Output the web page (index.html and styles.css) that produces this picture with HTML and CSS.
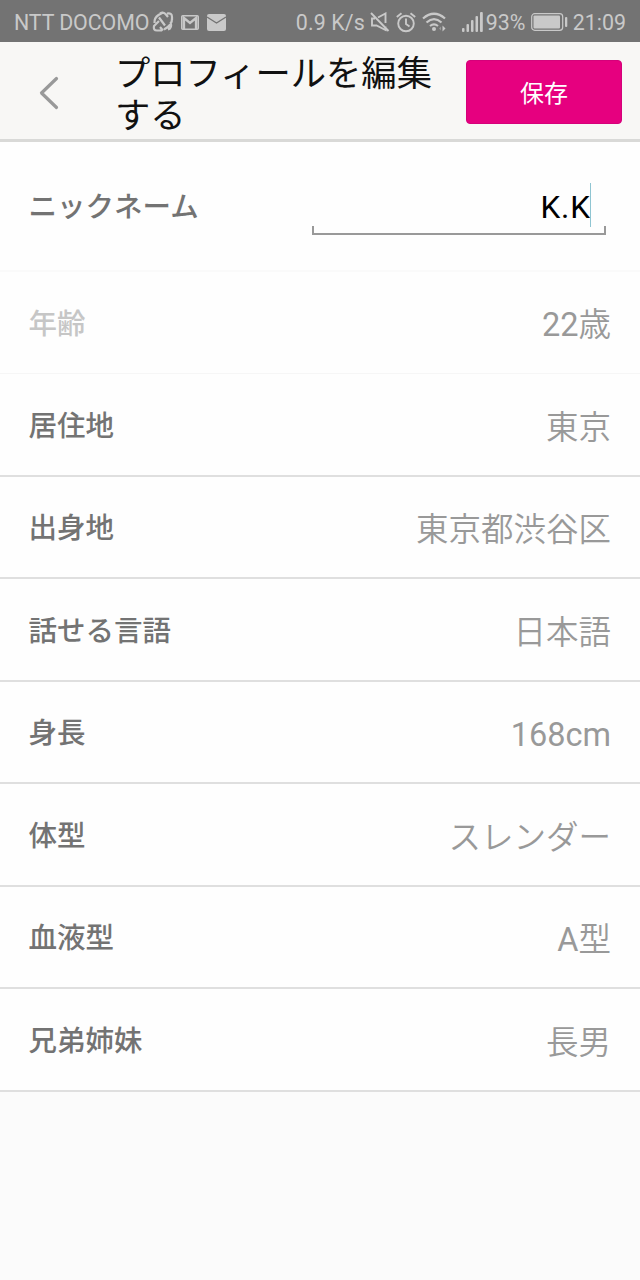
FILE: index.html
```html
<!DOCTYPE html>
<html lang="ja">
<head>
<meta charset="utf-8">
<title>プロフィールを編集する</title>
<link rel="stylesheet" href="styles.css">
</head>
<body>
<div class="status">
  <span class="carrier">NTT DOCOMO</span>
  <svg class="ic-sync" width="24" height="24" viewBox="0 0 24 24" fill="none" stroke="#c9c9c9" stroke-width="2.200" stroke-linejoin="round">
    <path d="M3.500 13Q3 8 7.500 5L12 2.500M9 3.500Q12 1.500 14.500 4L17 7M16 3.500Q21 2.500 21 7V10M21 8Q21.500 15 13 19.500M19.500 12Q21.500 18 17 19.500M8 11L3 16Q2 20.500 6 20.500H11M9 17L12 20.500M8 7.500L14 15.500"/>
  </svg>
  <svg class="ic-gmail" width="18" height="15" viewBox="0 0 18 15" fill="none" stroke="#c9c9c9">
    <rect x=".8" y=".8" width="16.400" height="13.400" rx="1" stroke-width="1.600"/>
    <path d="M3 14V3L9 8L15 3V14" stroke-width="2.300"/>
  </svg>
  <svg class="ic-mail" width="19" height="17" viewBox="0 0 19 17">
    <rect width="19" height="17" rx="2" fill="#c9c9c9"/>
    <path d="M0 3L9.500 9L19 3" fill="none" stroke="#737373" stroke-width="1.300"/>
  </svg>
  <span class="speed">0.9 K/s</span>
  <svg class="ic-mute" width="20" height="20" viewBox="0 0 20 20" fill="none" stroke="#c9c9c9" stroke-width="1.900">
    <path d="M1 1L18.500 19M5 6.500H2V13.500H6.500L15.500 18V14.500M8 5.500L15.500 1.500V11"/>
  </svg>
  <svg class="ic-alarm" width="20" height="21" viewBox="0 0 20 21" fill="none" stroke="#c9c9c9" stroke-width="1.900">
    <circle cx="10" cy="11.500" r="7.800"/>
    <path d="M10 6.500V12L13.500 14.500M.8 5L5.500 1.200M19.200 5L14.500 1.200"/>
  </svg>
  <svg class="ic-wifi" width="25" height="20" viewBox="0 0 25 20" fill="none" stroke="#c9c9c9" stroke-width="2.200">
    <path d="M1 6.500Q12 -3 23 6.500M4.500 10.500Q12 3.800 19.500 10.500M8 14Q12 10.800 16 14"/>
    <circle cx="12" cy="17" r="2" fill="#c9c9c9" stroke="none"/>
    <path d="M20.500 13.500L23.500 16.500L20.500 19.500Z" fill="#c9c9c9" stroke="none"/>
    <path d="M19 14.500L17 16.500L19 18.500Z" fill="#999" stroke="none"/>
  </svg>
  <svg class="ic-signal" width="21" height="20" viewBox="0 0 21 20" fill="#c9c9c9">
    <rect x="0" y="16" width="2.500" height="4" rx="1"/><rect x="4.500" y="12" width="2.500" height="8" rx="1"/><rect x="9" y="8" width="2.500" height="12" rx="1"/><rect x="13.500" y="4" width="2.500" height="16" rx="1"/><rect x="18" y="0" width="2.800" height="20" rx="1"/>
  </svg>
  <span class="percent">93%</span>
  <svg class="ic-battery" width="37" height="18" viewBox="0 0 37 18">
    <rect x=".7" y=".7" width="31" height="16.600" rx="3" fill="none" stroke="#c9c9c9" stroke-width="1.200"/>
    <rect x="2.500" y="2.500" width="26.500" height="13" rx="1" fill="#c9c9c9"/>
    <rect x="34" y="4" width="2.300" height="10" rx="1" fill="#c9c9c9"/>
  </svg>
  <span class="clock">21:09</span>
</div>
<header class="header">
  <svg class="back" width="20" height="34" viewBox="0 0 20 34"><path d="M17.500 2.500L2.500 17L17.500 31.500" fill="none" stroke="#999" stroke-width="3.200" stroke-linecap="round" stroke-linejoin="round"/></svg>
  <h1 class="title">プロフィールを編集する</h1>
  <button class="save">保存</button>
</header>
<main class="list">
  <div class="row nickname"><span class="label">ニックネーム</span><div class="field"><span class="name">K.K</span><i class="caret"></i></div></div>
  <div class="row age"><span class="label">年齢</span><span class="value"><span class="latin">22</span>歳</span></div>
  <div class="row"><span class="label">居住地</span><span class="value">東京</span></div>
  <div class="row"><span class="label">出身地</span><span class="value">東京都渋谷区</span></div>
  <div class="row"><span class="label">話せる言語</span><span class="value">日本語</span></div>
  <div class="row"><span class="label">身長</span><span class="value"><span class="latin">168cm</span></span></div>
  <div class="row"><span class="label">体型</span><span class="value">スレンダー</span></div>
  <div class="row"><span class="label">血液型</span><span class="value"><span class="latin">A</span>型</span></div>
  <div class="row"><span class="label">兄弟姉妹</span><span class="value">長男</span></div>
</main>
</body>
</html>
```
FILE: styles.css
```css
* { box-sizing: border-box; }
body {
  margin: 0;
  width: 640px;
  height: 1280px;
  overflow: hidden;
  background: #fbfbfb;
  font-family: Roboto, "Noto Sans CJK JP", sans-serif;
}
.status {
  display: flex;
  align-items: center;
  height: 42px;
  padding: 2px 14px 0;
  background: #737373;
  color: #c9c9c9;
  font-size: 21.4px;
  line-height: 40px;
  white-space: nowrap;
}
.status span { padding-top: 1px; }
.status svg { flex: none; }
.carrier { width: 137px; letter-spacing: -.1px; }
.ic-gmail { margin-left: 6px; }
.ic-mail { margin-left: 8px; }
.speed { width: 75px; margin-left: 70px; letter-spacing: .1px; }
.ic-mute { margin-left: -1px; }
.ic-alarm { margin-left: 6px; }
.ic-wifi { margin-left: 6px; }
.ic-signal { margin-left: 15px; }
.percent { width: 45px; margin-left: 3px; }
.clock { margin-left: 5px; }
.header {
  display: flex;
  align-items: center;
  height: 100px;
  padding: 0 18px 0 39px;
  border-bottom: 3px solid #d9d9d7;
  background: #f8f7f5;
}
.back { margin-top: 4px; }
.title {
  width: 330px;
  margin: 9px 0 0 56px;
  color: #111;
  font-size: 35.3px;
  font-weight: 400;
  line-height: 42px;
}
.save {
  width: 156px;
  height: 64px;
  margin: 3px 0 0 auto;
  padding: 5px 0 0;
  border: 1px solid #d5007a;
  border-radius: 4px;
  background: #e6007f;
  color: #fff;
  font: 24px/57px Roboto, "Noto Sans CJK JP", sans-serif;
}
.list { background: #fefefe; }
.row {
  display: flex;
  align-items: center;
  justify-content: space-between;
  height: 102.5px;
  padding: 0 29px 0 28.5px;
  border-bottom: 2px solid #dfdfdf;
}
.label {
  padding-top: 5px;
  color: #737373;
  font-size: 28.5px;
  font-weight: 500;
  line-height: 40px;
}
.value {
  padding-top: 7px;
  color: #999;
  font-size: 32.5px;
  font-weight: 350;
  line-height: 46px;
}
.latin { font-weight: 400; }
.row.nickname { height: 129.500px; padding-right: 34px; border-bottom-color: #fafafa; }
.row.age { border-bottom: 1px solid #f6f6f6; }
.age .label { color: #c6c6c6; }
.age .value { padding-top: 5px; }
.field {
  display: flex;
  align-items: flex-start;
  justify-content: flex-end;
  width: 294px;
  height: 52px;
  margin-top: 6px;
  padding-right: 15px;
  border-bottom: 2px solid #999;
  background:
    linear-gradient(#999, #999) left bottom / 2px 7px no-repeat,
    linear-gradient(#999, #999) right bottom / 2px 7px no-repeat;
}
.name { color: #000; font-size: 31.500px; line-height: 49px; letter-spacing: .8px; margin-right: -.8px; }
.caret { width: 1px; height: 44px; background: #8fc5d2; }
```
